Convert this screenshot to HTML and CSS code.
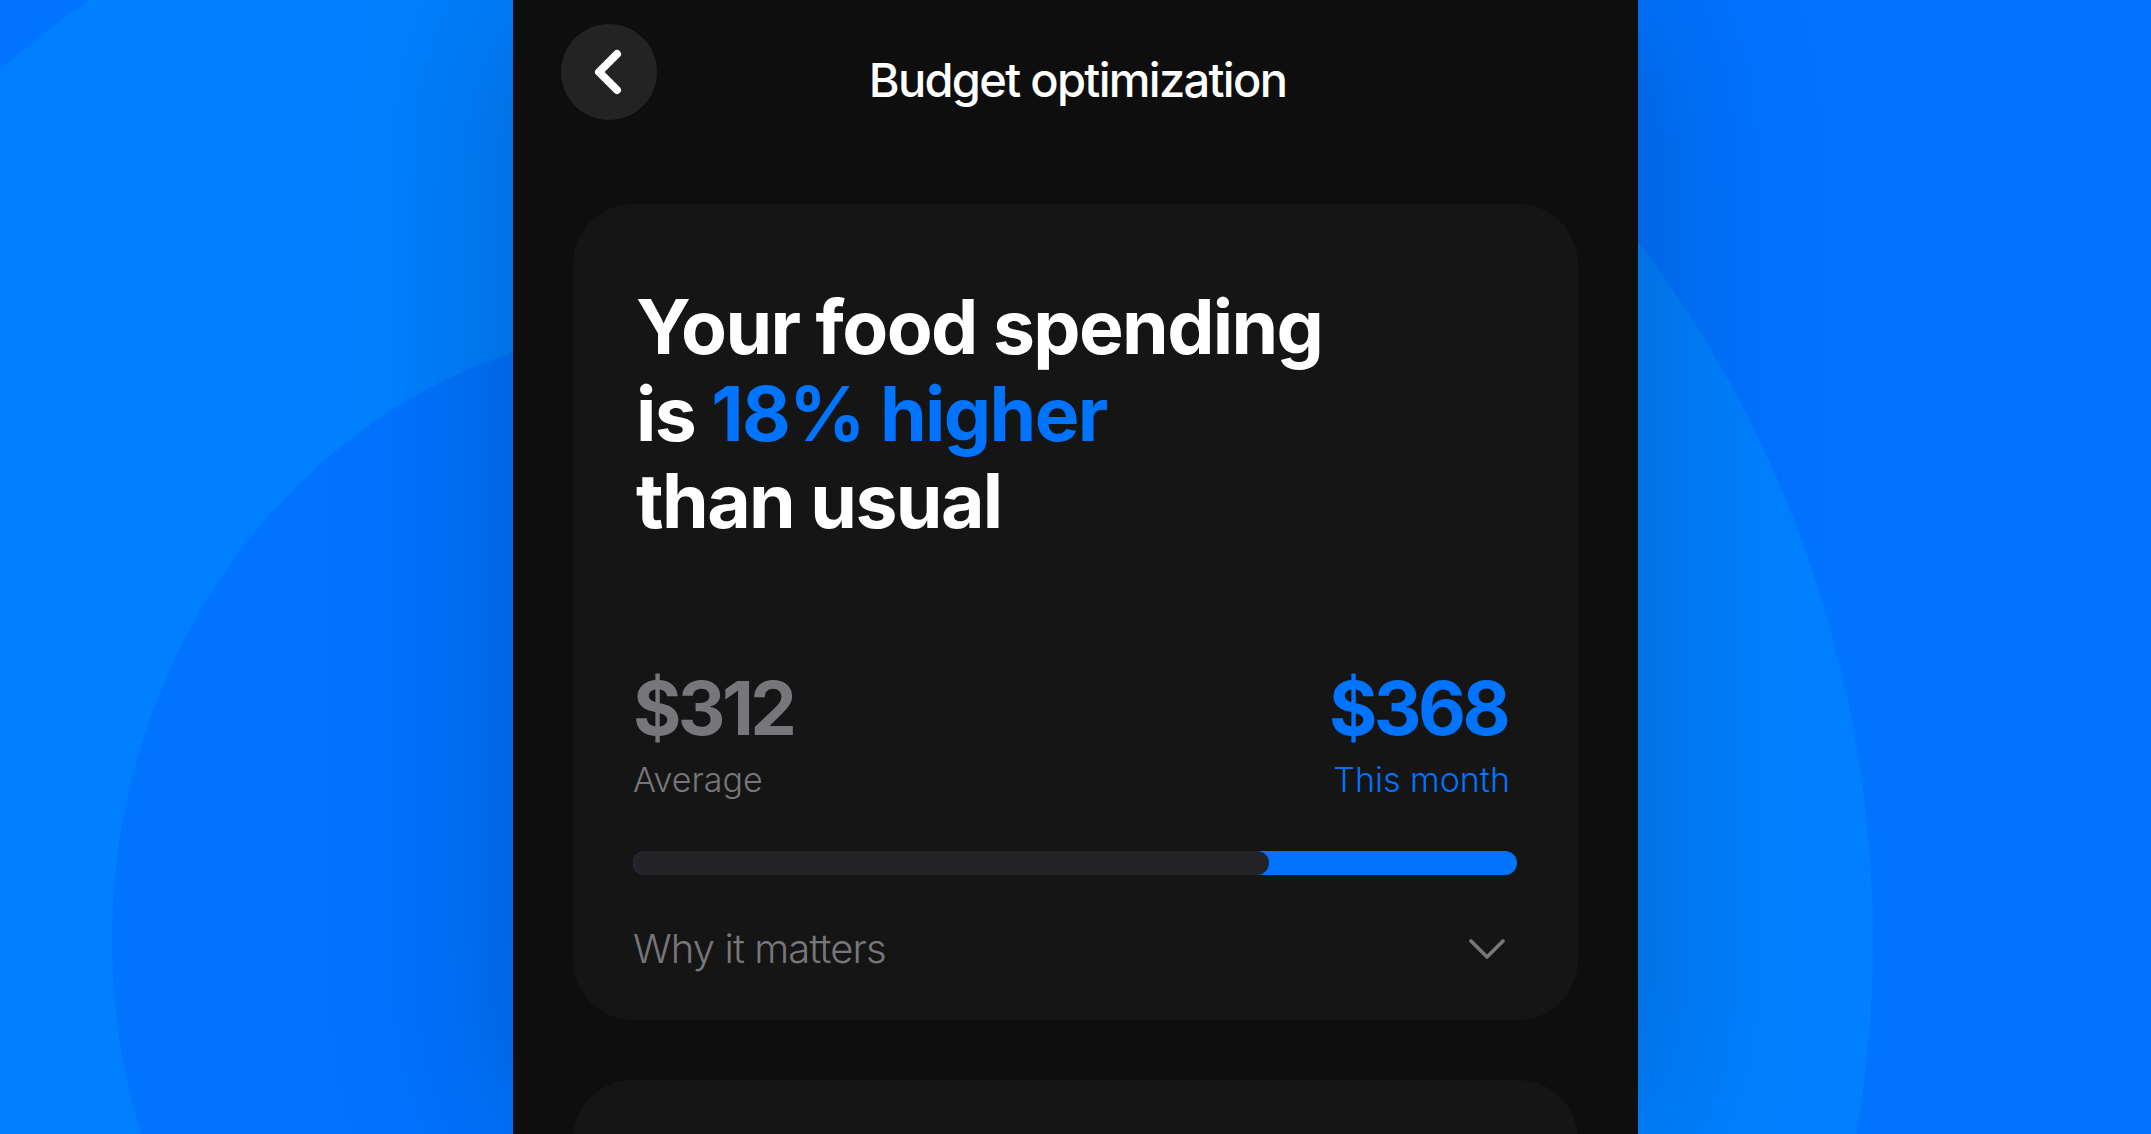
FILE: index.html
```html
<!DOCTYPE html>
<html lang="en">
<head>
    <meta charset="UTF-8">
    <meta name="viewport" content="width=device-width, initial-scale=1.0">
    <title>Budget optimization</title>
    <link rel="stylesheet" href="styles.css">
</head>
<body>
    <div class="blob-outer"></div>
    <div class="blob-inner"></div>

    <div class="phone">
        <div class="top-bar">
            <button class="back-btn" aria-label="Back">
                <svg width="96" height="96" viewBox="0 0 96 96" fill="none">
                    <path d="M56 30 L38 48 L56 66" stroke="#ffffff" stroke-width="8" stroke-linecap="round" stroke-linejoin="round"/>
                </svg>
            </button>
            <div class="top-title">Budget optimization</div>
        </div>

        <div class="card">
            <h1 class="headline">Your food spending<br>is <span class="accent">18% higher</span><br>than usual</h1>

            <div class="stats">
                <div class="stat">
                    <div class="stat-value">$312</div>
                    <div class="stat-label">Average</div>
                </div>
                <div class="stat stat-now">
                    <div class="stat-value">$368</div>
                    <div class="stat-label">This month</div>
                </div>
            </div>

            <div class="bar">
                <div class="bar-fill"></div>
            </div>

            <div class="why-row">
                <span>Why it matters</span>
                <svg width="36" height="20" viewBox="0 0 36 20" fill="none">
                    <path d="M2 2 L18 18 L34 2" stroke="#77777b" stroke-width="3.6" stroke-linecap="round" stroke-linejoin="round"/>
                </svg>
            </div>
        </div>

        <div class="card card-next"></div>
    </div>
</body>
</html>
```

FILE: styles.css
```css
* {
    box-sizing: border-box;
}

body {
    margin: 0;
    height: 100vh;
    overflow: hidden;
    background: #0073ff;
    font-family: Inter, "Liberation Sans", sans-serif;
    display: flex;
    justify-content: center;
}

/* background shapes behind the phone */
.blob-outer {
    position: absolute;
    left: -397px;
    top: -206px;
    width: 2270px;
    height: 2292px;
    border-radius: 50%;
    background: #0080ff;
}

.blob-inner {
    position: absolute;
    left: 112px;
    top: 325px;
    width: 1136px;
    height: 1230px;
    border-radius: 50%;
    background: #0073ff;
}

.phone {
    position: relative;
    width: 1125px;
    height: 100%;
    background: #0e0e0e;
    box-shadow: 0 0 170px rgba(0, 0, 0, 0.22);
    overflow: hidden;
    padding: 0 60px;
}

.top-bar {
    height: 204px;
    margin: 0 -12px;
    padding-top: 24px;
    display: flex;
    align-items: flex-start;
}

.back-btn {
    width: 96px;
    height: 96px;
    padding: 0;
    border: none;
    border-radius: 50%;
    background: #232323;
    flex: none;
}

.top-title {
    flex: 1;
    padding: 28px 92px 0 0;
    text-align: center;
    color: #ffffff;
    font-size: 47px;
    line-height: 56px;
    font-weight: 500;
    letter-spacing: -1.7px;
}

.card {
    height: 816px;
    padding: 79px 61px 0 60px;
    background: #151515;
    border-radius: 60px;
    margin-bottom: 60px;
}

.card-next {
    height: 300px;
}

.headline {
    margin: 0 0 0 3px;
    color: #ffffff;
    font-size: 75px;
    line-height: 87px;
    font-weight: 700;
    letter-spacing: -1.6px;
}

.accent {
    color: #0073ff;
}

.stats {
    margin-top: 121px;
    display: flex;
    justify-content: space-between;
    padding-right: 7px;
}

.stat-value {
    color: #77777b;
    font-size: 74px;
    line-height: 86px;
    font-weight: 700;
    letter-spacing: -3.6px;
}

.stat-label {
    margin-top: 8px;
    color: #77777b;
    font-size: 34px;
    line-height: 42px;
    font-weight: 300;
}

.stat-now {
    text-align: right;
}

.stat-now .stat-value {
    padding-right: 3px;
}

.stat-now .stat-value,
.stat-now .stat-label {
    color: #0073ff;
}

.bar {
    margin-top: 50px;
    height: 24px;
    border-radius: 12px;
    background: #0073ff;
}

.bar-fill {
    width: 72%;
    height: 100%;
    border-radius: 12px;
    background: #242426;
}

.why-row {
    margin-top: 51px;
    padding-right: 12px;
    display: flex;
    justify-content: space-between;
    align-items: center;
    color: #77777b;
    font-size: 40px;
    line-height: 46px;
    font-weight: 300;
    letter-spacing: -0.9px;
}
```
